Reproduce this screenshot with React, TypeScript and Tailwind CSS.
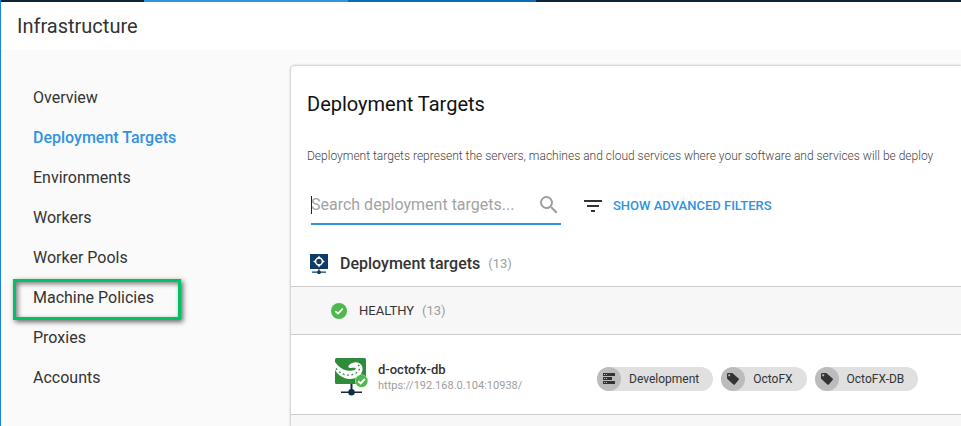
import React from "react";

const navItems = [
  "Overview",
  "Deployment Targets",
  "Environments",
  "Workers",
  "Worker Pools",
  "Machine Policies",
  "Proxies",
  "Accounts",
];

function NavLink({ label }: { label: string }) {
  const active = label === "Deployment Targets";
  const highlighted = label === "Machine Policies";
  return (
    <li className="relative h-10">
      <a
        href="#"
        aria-current={active ? "page" : undefined}
        className={
          active
            ? "block pl-8 text-base leading-10 font-medium text-[#2f93e0]"
            : "block pl-8 text-base leading-10 text-[#333333]"
        }
      >
        {label}
      </a>
      {highlighted && (
        <span className="pointer-events-none absolute top-px left-3 h-[41px] w-[168px] border-[3px] border-[#00c264] shadow-[2px_2px_5px_rgba(0,0,0,0.6),inset_2px_2px_5px_rgba(0,0,0,0.5)]" />
      )}
    </li>
  );
}

function CheckBadge({ className }: { className: string }) {
  return (
    <svg viewBox="0 0 16 16" className={className} aria-hidden="true">
      <circle cx="8" cy="8" r="8" fill="#4fb84f" />
      <path d="M4.3 8.1 7 10.6 11.8 5.6" fill="none" stroke="#fff" strokeWidth="1.8" />
    </svg>
  );
}

function SearchIcon() {
  return (
    <svg viewBox="0 0 24 24" className="size-6 shrink-0" fill="#9e9e9e" aria-hidden="true">
      <path d="M15.5 14h-.79l-.28-.27A6.471 6.471 0 0 0 16 9.5 6.5 6.5 0 1 0 9.5 16c1.61 0 3.09-.59 4.23-1.57l.27.28v.79l5 4.99L20.49 19l-4.99-5zm-6 0C7.01 14 5 11.99 5 9.5S7.01 5 9.5 5 14 7.01 14 9.5 11.99 14 9.5 14z" />
    </svg>
  );
}

function FilterIcon() {
  return (
    <svg viewBox="0 0 24 24" className="size-6" fill="#333333" aria-hidden="true">
      <path d="M10 18h4v-2h-4v2zM3 6v2h18V6H3zm3 7h12v-2H6v2z" />
    </svg>
  );
}

function TargetsIcon() {
  return (
    <svg viewBox="0 0 18 20" className="h-5 w-[18px]" aria-hidden="true">
      <path d="M0 0h18v15H0z" fill="#0d3c66" />
      <path d="M8.5 15h1v3h-1zM2 17.5h14v1.2H2z" fill="#0d3c66" />
      <circle cx="9" cy="18.2" r="1.9" fill="#0d3c66" />
      <circle cx="9" cy="7.5" r="3.4" fill="none" stroke="#fff" strokeWidth="1.5" />
      <path d="M9 1.6 10.8 4.4H7.2zM9 13.4 7.2 10.6h3.6zM3.1 7.5 5.9 5.7v3.6zM14.9 7.5 12.1 9.3V5.7z" fill="#fff" />
    </svg>
  );
}

function TentacleIcon() {
  return (
    <svg viewBox="0 0 34 40" className="h-10 w-[34px]" aria-hidden="true">
      <rect x="1" y="0" width="31" height="26" rx="1.5" fill="#2f8a3a" />
      <path
        d="M1 4C4 8.500 8 11.500 13 12.500C17 13.300 21.500 12.500 21.800 10.800C22 9.500 19.500 9.600 17.500 9.900C14.500 10.200 13.500 8.600 15.200 6.900C17 5.200 19.500 4.200 22 4.300C26.500 4.500 29 8 28.500 12C27.500 17.500 22 21.300 15.500 21C9 20.700 4 17 1 12Z"
        fill="#fff"
      />
      <path
        d="M2 10.500C5.500 15 10 17.200 15 17.200C20.500 17 25 14 25.600 10.300C25.800 8.300 24.500 6.600 22 6.500"
        fill="none"
        stroke="#2f8a3a"
        strokeWidth="1.300"
        strokeDasharray="1.800 2.600"
      />
      <path d="M16.500 26h2v8h-2zM7 33.500h21v1.500H7z" fill="#112b40" />
      <circle cx="17.500" cy="34.300" r="3.200" fill="#112b40" />
      <circle cx="27.500" cy="23" r="6.500" fill="#fff" />
      <circle cx="27.500" cy="23" r="6.200" fill="#4fb84f" />
      <path d="M24.200 23.200 26.700 25.500 30.800 21" fill="none" stroke="#fff" strokeWidth="1.900" />
    </svg>
  );
}

function ServerIcon() {
  return (
    <svg viewBox="0 0 12 11" className="h-[11px] w-3" fill="#333333" aria-hidden="true">
      <path fillRule="evenodd" d="M0 0h12v3H0zM1 1v1h1V1zM3 1v1h1V1zM0 4h9v3H0zM1 5v1h1V5zM3 5v1h1V5zM0 8h12v3H0zM1 9v1h1V9zM3 9v1h1V9z" />
    </svg>
  );
}

function TagIcon() {
  return (
    <svg viewBox="0 0 12 12" className="size-3" fill="#333333" aria-hidden="true">
      <path fillRule="evenodd" d="M0 1.200Q0 0 1.200 0H5.300L11.600 5.600Q12.300 6.300 11.600 7L7.800 11.500Q7.100 12.200 6.400 11.500L.4 6Q0 5.600 0 5ZM2.200 1.300a1 1 0 1 0 .01 0z" />
    </svg>
  );
}

function Chip({ icon, label }: { icon: React.ReactNode; label: string }) {
  return (
    <li className="flex h-6 items-center rounded-full bg-[#e0e0e0] pr-3.5 text-xs text-[#333333]">
      <span className="mr-2 flex size-6 items-center justify-center rounded-full bg-[#bcbcbc]">{icon}</span>
      {label}
    </li>
  );
}

export default function App() {
  return (
    <div className="flex min-h-screen flex-col overflow-hidden border-l border-[#1c84d8] bg-[#fafafa] font-[Roboto,sans-serif] text-[#333333]">
      <div className="flex h-0.5 bg-[#0f2535]">
        <span className="w-[143px]" />
        <span className="w-[204px] bg-[#2f93e0]" />
        <span className="w-[188px] bg-[#0f69b5]" />
      </div>
      <header className="flex h-12 items-center bg-white pl-4">
        <h1 className="text-xl">Infrastructure</h1>
      </header>
      <div className="flex flex-1">
        <nav aria-label="Infrastructure" className="w-[290px] shrink-0 pt-7">
          <ul>
            {navItems.map((item) => (
              <NavLink key={item} label={item} />
            ))}
          </ul>
        </nav>
        <main className="mt-4 min-w-0 flex-1 rounded-tl bg-white shadow-[0_0_3px_rgba(0,0,0,0.4)]">
          <h2 className="px-4 pt-6 text-xl text-[#111111]">Deployment Targets</h2>
          <p className="overflow-hidden pt-[30px] pl-4 text-xs font-light whitespace-nowrap text-[#444444]">
            Deployment targets represent the servers, machines and cloud services where your software and services will be deploy
          </p>
          <div className="mt-[22px] flex items-center gap-5 pl-5">
            <label className="relative flex h-[39px] w-[250px] items-center border-b-2 border-[#2f93e0]">
              <input
                type="text"
                autoFocus
                aria-label="Search deployment targets"
                placeholder="Search deployment targets..."
                className="h-8 min-w-0 flex-1 bg-transparent text-base caret-transparent outline-none placeholder:text-[#a3a3a3]"
              />
              <span className="pointer-events-none absolute top-2.5 left-0 h-[18px] w-px bg-[#222222]" />
              <SearchIcon />
            </label>
            <button type="button" className="flex items-center gap-2 text-[13px] font-medium text-[#2f93e0]">
              <FilterIcon />
              SHOW ADVANCED FILTERS
            </button>
          </div>
          <section>
            <div className="flex h-[62px] items-center border-b border-[#cccccc] pt-4 pl-[19px]">
              <TargetsIcon />
              <h3 className="ml-3 text-base font-medium">Deployment targets</h3>
              <span className="ml-2 text-[13px] text-[#9e9e9e]">(13)</span>
            </div>
            <div className="flex h-12 items-center border-b border-[#cccccc] bg-[#f7f7f7] pl-10">
              <CheckBadge className="size-4" />
              <h4 className="ml-3 text-[13px]">HEALTHY</h4>
              <span className="ml-2 text-[13px] text-[#9e9e9e]">(13)</span>
            </div>
            <div className="flex h-20 items-center border-b border-[#cccccc] pt-1.5 pl-[43px]">
              <TentacleIcon />
              <div className="ml-2.5 w-[219px]">
                <h5 className="text-[13px] leading-4 font-medium">d-octofx-db</h5>
                <p className="text-[11px] leading-4 text-[#9e9e9e]">https://192.168.0.104:10938/</p>
              </div>
              <ul className="mt-0.5 flex gap-2">
                <Chip icon={<ServerIcon />} label="Development" />
                <Chip icon={<TagIcon />} label="OctoFX" />
                <Chip icon={<TagIcon />} label="OctoFX-DB" />
              </ul>
            </div>
          </section>
          <div className="h-3 bg-[#f7f7f7]" />
        </main>
      </div>
    </div>
  );
}
